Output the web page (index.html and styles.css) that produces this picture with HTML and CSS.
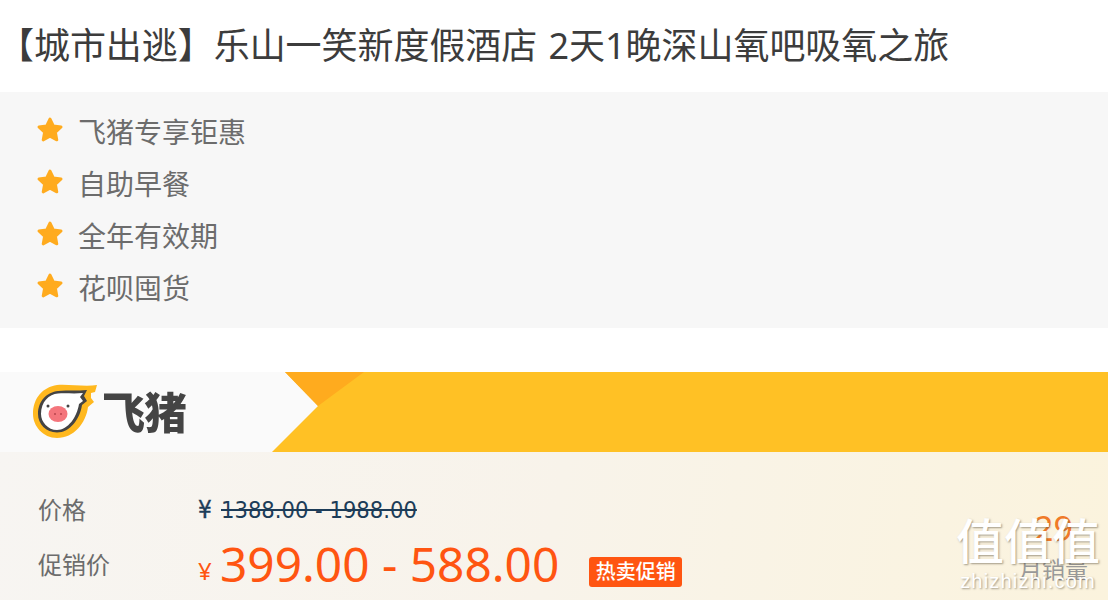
FILE: index.html
```html
<!DOCTYPE html>
<html lang="zh-CN">
  <head>
    <meta charset="UTF-8" />
    <title>乐山一笑新度假酒店</title>
    <link rel="stylesheet" href="styles.css">
  </head>
  <body>
    <h1 class="title">【城市出逃】乐山一笑新度假酒店 2天1晚深山氧吧吸氧之旅</h1>

    <ul class="perks">
      <li><svg class="star" viewBox="0 0 24 24"><path d="M12 2.5l2.9 6 6.6.9-4.8 4.6 1.2 6.5-5.9-3.2-5.9 3.2 1.2-6.5-4.8-4.6 6.6-.9z"/></svg>飞猪专享钜惠</li>
      <li><svg class="star" viewBox="0 0 24 24"><path d="M12 2.5l2.9 6 6.6.9-4.8 4.6 1.2 6.5-5.9-3.2-5.9 3.2 1.2-6.5-4.8-4.6 6.6-.9z"/></svg>自助早餐</li>
      <li><svg class="star" viewBox="0 0 24 24"><path d="M12 2.5l2.9 6 6.6.9-4.8 4.6 1.2 6.5-5.9-3.2-5.9 3.2 1.2-6.5-4.8-4.6 6.6-.9z"/></svg>全年有效期</li>
      <li><svg class="star" viewBox="0 0 24 24"><path d="M12 2.5l2.9 6 6.6.9-4.8 4.6 1.2 6.5-5.9-3.2-5.9 3.2 1.2-6.5-4.8-4.6 6.6-.9z"/></svg>花呗囤货</li>
    </ul>

    <div class="brand">
      <div class="logo">
        <svg class="pig" viewBox="0 0 64 54">
          <path d="M64 1L62 8 58 9 58 14 61 18 55 23C53 39 41 54 24 54 10 54 0 42 0 30 0 14 10 3 24 1 36 0 52 3 64 1z" fill="#ffb81e"/>
          <path d="M54 6L51 12 54 17 49 21C47 35 37 48.5 24 48.5 13 48.5 5 40 5 30 5 17 14 8 25 7 36 6 45 7 54 6z" fill="#444"/>
          <path d="M50 9L47 13 50 17 46 20C44 33 35 46 24 46 15 46 8 38 8 30 8 18 16 10 25 9.5 34 9 42 10 50 9z" fill="#fff"/>
          <ellipse cx="25" cy="30" rx="9.5" ry="8" fill="#f4757c"/>
          <circle cx="15" cy="22" r="1.5" fill="#444"/>
          <circle cx="35" cy="22" r="1.5" fill="#444"/>
          <circle cx="22" cy="30" r="1" fill="#b8454c"/>
          <circle cx="28" cy="30" r="1" fill="#b8454c"/>
        </svg>
        <span class="logo-text">飞猪</span>
      </div>
      <svg class="brand-shape" viewBox="0 0 836 80" preserveAspectRatio="none">
        <rect width="836" height="80" fill="#ffc125"/>
        <polygon points="0,0 13,0 46,34 0,80" fill="#fafafa"/>
        <polygon points="13,0 92,0 46,34" fill="#ffab1e"/>
      </svg>
    </div>

    <div class="deal">
      <div class="prices">
        <div class="row old">
          <span class="label">价格</span>
          <span class="cny">¥</span>
          <s>1388.00 - 1988.00</s>
        </div>
        <div class="row now">
          <span class="label">促销价</span>
          <span class="cny">¥</span>
          <span class="amount">399.00 - 588.00</span>
          <span class="badge">热卖促销</span>
        </div>
      </div>
      <div class="sales">
        <span class="sales-num">29</span>
        <span class="sales-label">月销量</span>
      </div>
      <div class="watermark">
        <span class="wm-big">值值值</span>
        <span class="wm-small">zhizhizhi.com</span>
      </div>
    </div>
  </body>
</html>
```

FILE: styles.css
```css
* {
  box-sizing: border-box;
}
html,
body {
  height: 600px;
  overflow: hidden;
}
body {
  margin: 0;
  background: #fff;
  font-family: "Noto Sans", "Noto Sans CJK SC", sans-serif;
}
.title {
  margin: 0;
  height: 92px;
  font-size: 36px;
  font-weight: 400;
  line-height: 92px;
  text-indent: -2px;
  word-spacing: 2px;
  letter-spacing: -.05px;
  color: #3c3c3c;
  white-space: nowrap;
}
.perks {
  list-style: none;
  margin: 0;
  padding: 13px 0 15px 38px;
  height: 236px;
  background: #f7f7f7;
}
.perks li {
  display: flex;
  align-items: center;
  height: 52px;
  font-size: 28px;
  color: #6c6c6c;
}
.star {
  width: 28px;
  height: 28px;
  margin-left: -2px;
  margin-right: 14px;
  margin-top: -2px;
  fill: #ffab1e;
  stroke: #ffab1e;
  stroke-width: 2.4;
  stroke-linejoin: round;
}
.brand {
  display: flex;
  height: 80px;
  margin-top: 44px;
  background: #fafafa;
}
.logo {
  display: flex;
  align-items: center;
  width: 272px;
  padding-left: 33px;
}
.pig {
  flex: none;
  width: 64px;
  height: 54px;
  margin-top: -2px;
}
.logo-text {
  margin-left: 5px;
  font-size: 43px;
  font-weight: 900;
  line-height: 1;
  color: #444;
  letter-spacing: -1px;
  filter: blur(.5px);
}
.brand-shape {
  flex: 1;
  height: 80px;
}
.deal {
  position: relative;
  display: flex;
  justify-content: space-between;
  height: 148px;
  padding: 38px 20px 0 38px;
  background: linear-gradient(100deg, #f7f5f2 0%, #f8f3ea 50%, #fbf3dd 100%);
}
.row {
  display: flex;
  align-items: center;
}
.label {
  width: 160px;
  font-size: 24px;
  color: #6c6c6c;
}
.old {
  height: 40px;
  color: #1c3c58;
}
.old .label {
  margin-top: -3px;
}
.old .cny {
  width: 23px;
  font-size: 24px;
  font-family: "DejaVu Sans", sans-serif;
  font-stretch: condensed;
  -webkit-text-stroke: .4px #1c3c58;
}
.old s {
  font-family: "DejaVu Sans", sans-serif;
  font-stretch: condensed;
  font-size: 23.5px;
}
.now {
  height: 66px;
  color: #ff5511;
}
.now .cny {
  width: 22px;
  margin-top: 14px;
  font-size: 24px;
}
.amount {
  font-size: 47.8px;
}
.badge {
  width: 93px;
  height: 30px;
  margin-left: 30px;
  margin-top: 18px;
  border-radius: 3px;
  background: #ff5511;
  color: #fff;
  font-size: 20px;
  font-weight: 500;
  line-height: 30px;
  text-align: center;
}
.sales {
  display: flex;
  flex-direction: column;
  align-items: center;
  padding-top: 16px;
}
.sales-num {
  font-size: 34px;
  line-height: 44px;
  color: #f07a28;
}
.sales-label {
  margin-top: 4px;
  font-size: 23px;
  line-height: 30px;
  color: #999;
}
.watermark {
  position: absolute;
  right: 8px;
  top: 62px;
  display: flex;
  flex-direction: column;
  align-items: center;
  color: #fff;
  text-shadow: 1px 1px 2px rgba(90, 80, 60, .55);
}
.wm-big {
  font-size: 48px;
  font-weight: 500;
  line-height: 54px;
}
.wm-small {
  font-family: "Liberation Sans", sans-serif;
  font-size: 20px;
  line-height: 26px;
  letter-spacing: 1.2px;
}
```
